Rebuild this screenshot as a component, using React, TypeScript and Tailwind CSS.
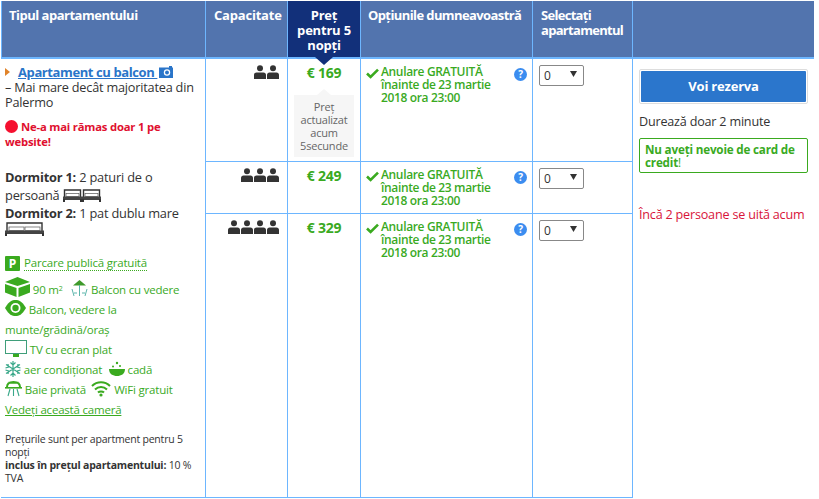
import React from "react";

const G = "#3aaa1f";

function Person() {
  return (
    <svg width="12" height="14" viewBox="0 0 12 14" fill="#333" className="block">
      <circle cx="6" cy="3.2" r="3" />
      <path d="M0 14V10C0 8.5 1 7.5 2.5 7.5h7C11 7.5 12 8.5 12 10V14Z" />
    </svg>
  );
}

function People({ n }: { n: number }) {
  return (
    <div className="flex justify-end gap-[1px] pt-[6px] pr-[8px]">
      {Array.from({ length: n }).map((_, i) => (
        <Person key={i} />
      ))}
    </div>
  );
}

function Bed({ w = 19 }: { w?: number }) {
  return (
    <svg width={w} height="13" viewBox={`0 0 ${w} 13`} className="inline-block align-[-2px]">
      <path d={`M1.5 8V1H${w - 1.5}V8`} fill="none" stroke="#333" strokeWidth="1.4" />
      <rect x="3" y="4.5" width={w - 6} height="3" fill="#fff" stroke="#555" strokeWidth="0.7" />
      <rect x="0" y="7.5" width={w} height="3.5" fill="#444" />
      <rect x="0" y="10" width="2" height="3" fill="#333" />
      <rect x={w - 2} y="10" width="2" height="3" fill="#333" />
    </svg>
  );
}

function DoubleBed() {
  return (
    <svg width="39" height="14" viewBox="0 0 39 14" className="block">
      <path d="M2 9V1H37V9" fill="none" stroke="#333" strokeWidth="1.4" />
      <rect x="4" y="5" width="15" height="3.5" fill="#fff" stroke="#555" strokeWidth="0.7" />
      <rect x="20" y="5" width="15" height="3.5" fill="#fff" stroke="#555" strokeWidth="0.7" />
      <rect x="0" y="8.5" width="39" height="3.5" fill="#444" />
      <rect x="0" y="11" width="2" height="3" fill="#333" />
      <rect x="37" y="11" width="2" height="3" fill="#333" />
    </svg>
  );
}

function Check() {
  return (
    <svg width="13" height="11" viewBox="0 0 13 11" className="block shrink-0">
      <path d="M1 5.5 4.6 9 12 1.6" fill="none" stroke={G} strokeWidth="2.6" />
    </svg>
  );
}

function Help() {
  return (
    <div className="w-[13px] h-[13px] rounded-full bg-[#3b8df0] text-white text-[10px] leading-[13px] font-bold text-center shrink-0">?</div>
  );
}

function Cube() {
  return (
    <svg width="25" height="20" viewBox="0 0 25 20" className="inline-block align-[-3px]">
      <path d="M12.5 0 25 5 12.5 9 0 5Z M0 7 11.5 11V20L0 15.5Z M25 7 13.5 11V20L25 15.5Z" fill={G} />
    </svg>
  );
}

function Parasol() {
  return (
    <svg width="17" height="18" viewBox="0 0 17 18" className="inline-block align-[-3px] ml-[3px]">
      <path d="M2 6.5 8.5 1 15 6.5Z" fill="#3f9a2b" />
      <path d="M8.5 6V17M1 10l2 7M16 10l-2 7M3 14h3M11 14h3" stroke="#5bb5ab" strokeWidth="1" fill="none" />
    </svg>
  );
}

function Eye() {
  return (
    <svg width="21" height="16" viewBox="0 0 21 16" className="inline-block align-[-2px]">
      <path d="M0 8C4 1 7 0 10.5 0S17 1 21 8C17 15 14 16 10.5 16S4 15 0 8Z" fill={G} />
      <circle cx="10.5" cy="8" r="5" fill="#fff" />
      <circle cx="10.5" cy="8" r="3.2" fill={G} />
    </svg>
  );
}

function Tv() {
  return (
    <svg width="22" height="17" viewBox="0 0 22 17" className="inline-block align-[-3px]">
      <rect x="0.5" y="0.5" width="21" height="13" fill="#fff" stroke="#3f9e7a" />
      <rect x="8" y="14" width="6" height="3" fill={G} />
    </svg>
  );
}

function Snow() {
  return (
    <svg width="16" height="16" viewBox="0 0 16 16" className="inline-block align-[-3px]" stroke="#3aa88a" strokeWidth="1.2" fill="none">
      <path d="M8 0V16M1 3.5 15 12.5M15 3.5 1 12.5M5.5 1.5 8 4 10.5 1.5M5.5 14.5 8 12 10.5 14.5M0.5 7 3.5 6 3 3M15.5 7 12.5 6 13 3M0.5 9 3.5 10 3 13M15.5 9 12.5 10 13 13" />
    </svg>
  );
}

function Tub() {
  return (
    <svg width="16" height="16" viewBox="0 0 16 16" className="inline-block align-[-3px] ml-[1px]">
      <path d="M0 8H16C16 13 12 15 8 15S0 13 0 8Z" fill={G} />
      <circle cx="8" cy="2" r="1.2" fill={G} />
      <circle cx="4" cy="5.5" r="1" fill={G} />
      <circle cx="11" cy="5" r="1" fill={G} />
    </svg>
  );
}

function Shower() {
  return (
    <svg width="17" height="16" viewBox="0 0 17 16" className="inline-block align-[-3px]">
      <path d="M3.5 1.8H13.5M2 6C2 3 4 1 8.5 1S15 3 15 6" fill="none" stroke={G} strokeWidth="2" />
      <rect x="0" y="6" width="17" height="1.6" fill={G} />
      <path d="M5 8 3 15M8.5 8V15M12 8l2 7" stroke="#3aa88a" strokeWidth="1.1" fill="none" />
    </svg>
  );
}

function Wifi() {
  return (
    <svg width="20" height="16" viewBox="0 0 20 16" className="inline-block align-[-3px]" fill="none" stroke={G} strokeWidth="2">
      <path d="M1 5C6 0 14 0 19 5M4 8.5C7.5 5 12.5 5 16 8.5M7 11.5C8.5 10 11.5 10 13 11.5" />
      <circle cx="10" cy="14" r="1.6" fill={G} stroke="none" />
    </svg>
  );
}

function Camera() {
  return (
    <svg width="14" height="12" viewBox="0 0 14 12" className="inline-block align-[-1px]">
      <rect x="0" y="1.5" width="14" height="10.5" fill="#2a75c9" />
      <circle cx="8" cy="6.5" r="3.2" fill="#fff" />
      <circle cx="8" cy="6.5" r="1.9" fill="#2a75c9" />
      <rect x="10" y="0" width="3" height="2" fill="#2a75c9" />
    </svg>
  );
}

function HeadCell({ children, className = "" }: { children: React.ReactNode; className?: string }) {
  return (
    <div className={`bg-[#5274ae] border-r border-b-2 border-[#6db6ff] text-white font-bold text-[13px] leading-[15px] pt-[7px] px-[8px] ${className}`}>
      {children}
    </div>
  );
}

function Price({ v }: { v: string }) {
  return <div className="text-center font-bold text-[14px] leading-[17px] pt-[5px] text-[#3aaa1f]">€ {v}</div>;
}

function Option() {
  return (
    <div className="flex items-start pl-[5px] pr-[5px] pt-[6px] gap-[2px]">
      <div className="pt-[3px]"><Check /></div>
      <div className="grow font-semibold text-[12px] tracking-[-0.35px] leading-[13px] text-[#3aaa1f]">
        Anulare GRATUITĂ<br />înainte de 23 martie<br />2018 ora 23:00
      </div>
      <div className="pt-[3px]"><Help /></div>
    </div>
  );
}

function Sel() {
  return (
    <div className="ml-[6px] mt-[6px] w-[45px] h-[21px] border border-[#888] rounded-[2px] bg-white flex items-center justify-between pl-[4px] pr-[6px] text-[12px] text-[#333]">
      <span>0</span>
      <svg width="7" height="6" viewBox="0 0 7 6" className="-mt-[3px]"><path d="M0 0H7L3.5 6Z" fill="#333" /></svg>
    </div>
  );
}

export default function App() {
  const cell = "border-r border-b border-[#6db6ff]";
  return (
    <div className="w-[819px] h-[499px] bg-white pt-[1px] pl-[1px] text-[#333] tracking-[-0.2px] overflow-hidden" style={{ fontFamily: '"Open Sans","Noto Sans",sans-serif' }}>
      <div className="grid w-[813px] grid-cols-[205px_82px_73px_172px_100px_181px] grid-rows-[58px_103px_52px_284px]">
        <HeadCell className="border-l tracking-[-0.5px] !pl-[7px]">Tipul apartamentului</HeadCell>
        <HeadCell>Capacitate</HeadCell>
        <HeadCell className="!bg-[#12307a] text-center !px-[2px] relative">
          Preț<br />pentru 5<br />nopți
          <span className="absolute left-1/2 -translate-x-1/2 -bottom-[8px] w-0 h-0 border-l-[9px] border-r-[9px] border-t-[8px] border-l-transparent border-r-transparent border-t-[#12307a]" />
        </HeadCell>
        <HeadCell className="whitespace-nowrap tracking-[-0.6px] !px-[7px]">Opțiunile dumneavoastră</HeadCell>
        <HeadCell className="tracking-[-0.7px]">Selectați<br />apartamentul</HeadCell>
        <HeadCell className="!border-r-0">{""}</HeadCell>

        <div className="row-span-3 border-r border-b border-[#6db6ff] pl-[4px] pr-[6px] pt-[6px] text-[12.7px] leading-[15px]">
          <div>
            <span className="inline-block w-0 h-0 border-t-[4px] border-b-[4px] border-l-[5px] border-t-transparent border-b-transparent border-l-[#e0832a] mr-[8px] align-[1px]" />
            <span className="font-bold text-[13px] tracking-[-0.4px] text-[#2a75c9] underline">Apartament cu balcon </span>
            <span className="ml-[2px]"><Camera /></span>
          </div>
          <div>– Mai mare decât majoritatea din Palermo</div>
          <div className="mt-[9px] font-bold text-[11.3px] leading-[15px] text-[#e0102f]">
            <span className="inline-block w-[13px] h-[13px] rounded-full bg-[#f5102f] mr-[3px] align-[-2px]" />
            Ne-a mai rămas doar 1 pe website!
          </div>
          <div className="mt-[19px] text-[12.8px] leading-[18px]">
            <div><b>Dormitor 1:</b> 2 paturi de o persoană <Bed /><Bed /></div>
            <div><b>Dormitor 2:</b> 1 pat dublu mare</div>
            <DoubleBed />
          </div>
          <div className="mt-[17px] text-[11.5px] leading-[20px] text-[#3aaa1f]">
            <div className="flex items-center gap-[4px] h-[20px]">
              <span className="w-[15px] h-[15px] bg-[#3aaa1f] text-white text-[12px] leading-[15px] font-bold text-center rounded-[1px]">P</span>
              <span className="border-b border-dotted border-[#3aaa1f] leading-[14px]">Parcare publică gratuită</span>
            </div>
            <div className="mt-[4px]"><Cube /> 90 m<sup className="text-[7px]">2</sup> &nbsp;<Parasol /> Balcon cu vedere</div>
            <div><Eye /> Balcon, vedere la</div>
            <div>munte/grădină/oraș</div>
            <div><Tv /> TV cu ecran plat</div>
            <div><Snow /> aer condiționat &nbsp;<Tub /> cadă</div>
            <div><Shower /> Baie privată &nbsp;<Wifi /> WiFi gratuit</div>
            <div className="underline">Vedeți această cameră</div>
          </div>
          <div className="mt-[13px] text-[10.5px] leading-[13px]">
            Prețurile sunt per apartment pentru 5 nopți<br />
            <b>inclus în prețul apartamentului:</b> 10 % TVA
          </div>
        </div>

        <div className={cell}><People n={2} /></div>
        <div className={cell}>
          <Price v="169" />
          <div className="relative mx-[6px] mt-[14px] bg-[#f6f6f6] text-[#666] text-[11px] leading-[13px] text-center py-[5px]">
            <span className="absolute left-1/2 -translate-x-1/2 -top-[6px] w-0 h-0 border-l-[7px] border-r-[7px] border-b-[6px] border-l-transparent border-r-transparent border-b-[#f6f6f6]" />
            Preț<br />actualizat<br />acum<br />5secunde
          </div>
        </div>
        <div className={cell}><Option /></div>
        <div className={cell}><Sel /></div>

        <div className="row-span-3 px-[6px] pt-[10px] text-[12.6px] leading-[16px]">
          <div className="border border-[#ddd] rounded-[2px] p-[1px]">
            <div className="bg-[#2b76cc] h-[31px] rounded-[1px] text-white font-bold text-[13px] leading-[31px] text-center">Voi rezerva</div>
          </div>
          <div className="mt-[10px]">Durează doar 2 minute</div>
          <div className="mt-[8px] border border-[#3aaa1f] rounded-[2px] px-[5px] pt-[4px] pb-[3px] text-[11.7px] leading-[13px] text-[#3aaa1f]">
            <b>Nu aveți nevoie de card de credit</b>!
          </div>
          <div className="mt-[34px] whitespace-nowrap text-[#d8143a]">Încă 2 persoane se uită acum</div>
        </div>

        <div className={cell}><People n={3} /></div>
        <div className={cell}><Price v="249" /></div>
        <div className={cell}><Option /></div>
        <div className={cell}><Sel /></div>

        <div className={cell}><People n={4} /></div>
        <div className={cell}><Price v="329" /></div>
        <div className={cell}><Option /></div>
        <div className={cell}><Sel /></div>
      </div>
    </div>
  );
}
